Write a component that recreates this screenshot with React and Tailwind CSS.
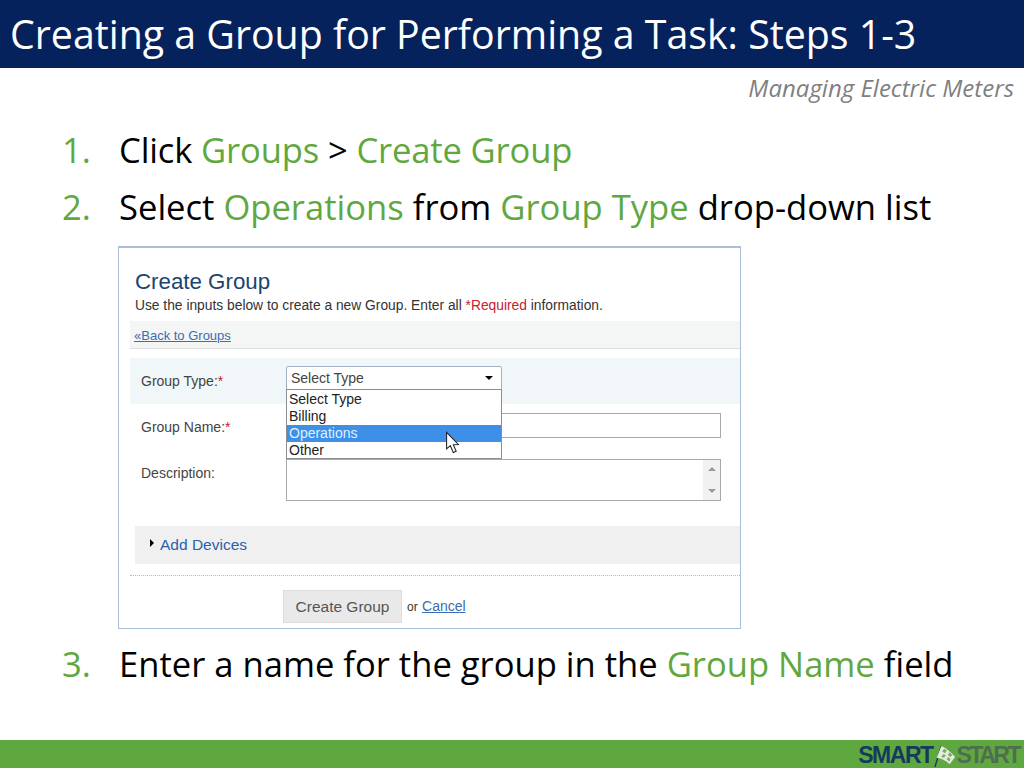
import React from 'react';

const slideFont = 'font-["Open_Sans",sans-serif]';
const webFont = 'font-["Liberation_Sans",Arial,sans-serif]';

function Step({ n, tight, children }) {
  return (
    <div className="flex h-[57px] items-center text-[34.6px] leading-none text-black">
      <span className="w-[57px] text-[#5fa83f]">{n}.</span>
      <span className={tight ? 'tracking-[-0.15px]' : ''}>{children}</span>
    </div>
  );
}

const G = ({ children }) => <span className="text-[#5fa83f]">{children}</span>;

function CreateGroupPanel() {
  return (
    <div className={`ml-[118px] flex h-[383px] w-[623px] flex-col border border-[#a9c0d8] border-t-2 bg-white pl-[11px] ${webFont}`}>
      <div className="pl-[5px] pt-[21px] text-[22.3px] leading-[26px] text-[#1c4470]">Create Group</div>
      <div className="whitespace-nowrap pl-[5px] pt-[3px] text-[13.8px] leading-[16px] text-[#333]">
        Use the inputs below to create a new Group. Enter all <span className="text-[#c8202f]">*Required</span> information.
      </div>
      <div className="mt-[7px] flex h-[28px] items-center border-b border-[#dedede] bg-[#f4f5f5] pl-[4px] pt-[2px] text-[13px] text-[#3a6eb0] underline">
        «Back to Groups
      </div>
      <div className="relative mt-[9px] flex flex-col text-[14px] text-[#444]">
        <div className="flex h-[46px] bg-[#f1f6f8] pl-[11px]">
          <span className="w-[145px] pt-[13px] text-[14px]">Group Type:<span className="text-[#c8202f]">*</span></span>
          <div className="mt-[8px] flex h-[24px] w-[216px] items-center justify-between rounded-t-[2px] border border-[#9fb2c4] bg-white pl-[4px] pr-[8px]">
            Select Type
            <span className="h-0 w-0 border-x-[4px] border-t-[4px] border-x-transparent border-t-black" />
          </div>
        </div>
        <div className="mt-[9px] flex h-[25px] pl-[11px]">
          <span className="w-[145px] pt-[4px]">Group Name:<span className="text-[#c8202f]">*</span></span>
          <div className="w-[435px] border border-[#aaa] bg-white" />
        </div>
        <div className="mt-[21px] flex h-[42px] pl-[11px]">
          <span className="w-[145px] pt-[4px]">Description:</span>
          <div className="flex w-[435px] justify-end border border-[#aaa] bg-white">
            <div className="flex w-[17px] flex-col items-center justify-between bg-[#f1f1f1] py-[7px]">
              <span className="h-0 w-0 border-x-[4px] border-b-[4px] border-x-transparent border-b-[#999]" />
              <span className="h-0 w-0 border-x-[4px] border-t-[4px] border-x-transparent border-t-[#999]" />
            </div>
          </div>
        </div>

        {/* open drop-down list */}
        <div className="absolute left-[156px] top-[31px] flex h-[70px] w-[216px] flex-col border border-[#8a8f96] bg-white pt-[1px] text-[14px] leading-[17px] text-[#222]">
          <div className="px-[2px]">Select Type</div>
          <div className="px-[2px]">Billing</div>
          <div className="bg-[#3d8fe8] px-[2px] text-[#dff0ff]">Operations</div>
          <div className="px-[2px]">Other</div>
          <svg className="absolute left-[158px] top-[41px]" width="16" height="24" viewBox="0 0 15 22">
            <path d="M1.5 1 L1.5 16.5 L5 13.5 L7.8 20 L10.5 18.8 L7.8 12.6 L12.5 12.4 Z" fill="#fff" stroke="#222" strokeWidth="1" />
          </svg>
        </div>
      </div>
      <div className="ml-[5px] mt-[25px] flex h-[38px] items-center bg-[#f0f0f0] pl-[15px] text-[15.5px] text-[#2a62a8]">
        <span className="mb-[4px] mr-[6px] h-0 w-0 border-y-[4px] border-l-[4px] border-y-transparent border-l-black" />
        Add Devices
      </div>
      <div className="mt-[11px] border-t border-dotted border-[#bbb]" />
      <div className="mt-[14px] flex items-center pl-[153px]">
        <div className="flex h-[33px] w-[119px] items-center justify-center border border-[#ddd] bg-[#e9e9e9] text-[15.5px] text-[#555]">
          Create Group
        </div>
        <span className="ml-[5px] text-[12px] text-[#333]">or <span className="ml-[1px] text-[14px] text-[#3a6eb0] underline">Cancel</span></span>
      </div>
    </div>
  );
}

function Logo() {
  return (
    <div className={`flex items-center pr-[5px] pt-[3px] text-[23px] font-bold leading-none ${webFont}`}>
      <span className="tracking-[-1.5px] text-[#143a5e]">SMART</span>
      <svg width="22" height="24" viewBox="0 0 24 24" className="mx-[1px]">
        <path d="M1 24 L8 1" stroke="#143a5e" strokeWidth="1.5" fill="none" />
        <path d="M8 1 C13 3 18 7 23 13 L17 21 C13 17 8 15 3 14 Z" fill="#e4ecdc" />
        <path d="M11 4 L14 6 L12 9 L9 7 Z M17 8 L20 11 L18 13 L15 11 Z M10 10 L13 11 L11 14 L8 13 Z M15 13 L18 15 L17 18 L14 16 Z" fill="#7fa86a" />
      </svg>
      <span className="tracking-[-2.5px] text-[#4f6e4f]">START</span>
    </div>
  );
}

export default function App() {
  return (
    <div className={`flex h-[768px] w-[1024px] flex-col overflow-hidden bg-white ${slideFont}`}>
      <div className="flex h-[68px] items-center whitespace-nowrap bg-[#06225c] pl-[10px] pt-[2px] text-[39.3px] leading-none text-white">
        Creating a Group for Performing a Task: Steps 1-3
      </div>
      <div className="h-[42px] pr-[10px] pt-[6px] text-right text-[24px] italic leading-[28px] text-[#808080]">
        Managing Electric Meters
      </div>
      <div className="ml-[62px] mt-[12px]">
        <Step n={1} tight>Click <G>Groups</G> &gt; <G>Create Group</G></Step>
        <Step n={2}>Select <G>Operations</G> from <G>Group Type</G> drop-down list</Step>
      </div>
      <div className="mt-[10px]">
        <CreateGroupPanel />
      </div>
      <div className="ml-[62px] mt-[7px]">
        <Step n={3}>Enter a name for the group in the <G>Group Name</G> field</Step>
      </div>
      <div className="mt-auto flex h-[28px] items-center justify-end overflow-hidden bg-[#5fa83f]">
        <Logo />
      </div>
    </div>
  );
}
